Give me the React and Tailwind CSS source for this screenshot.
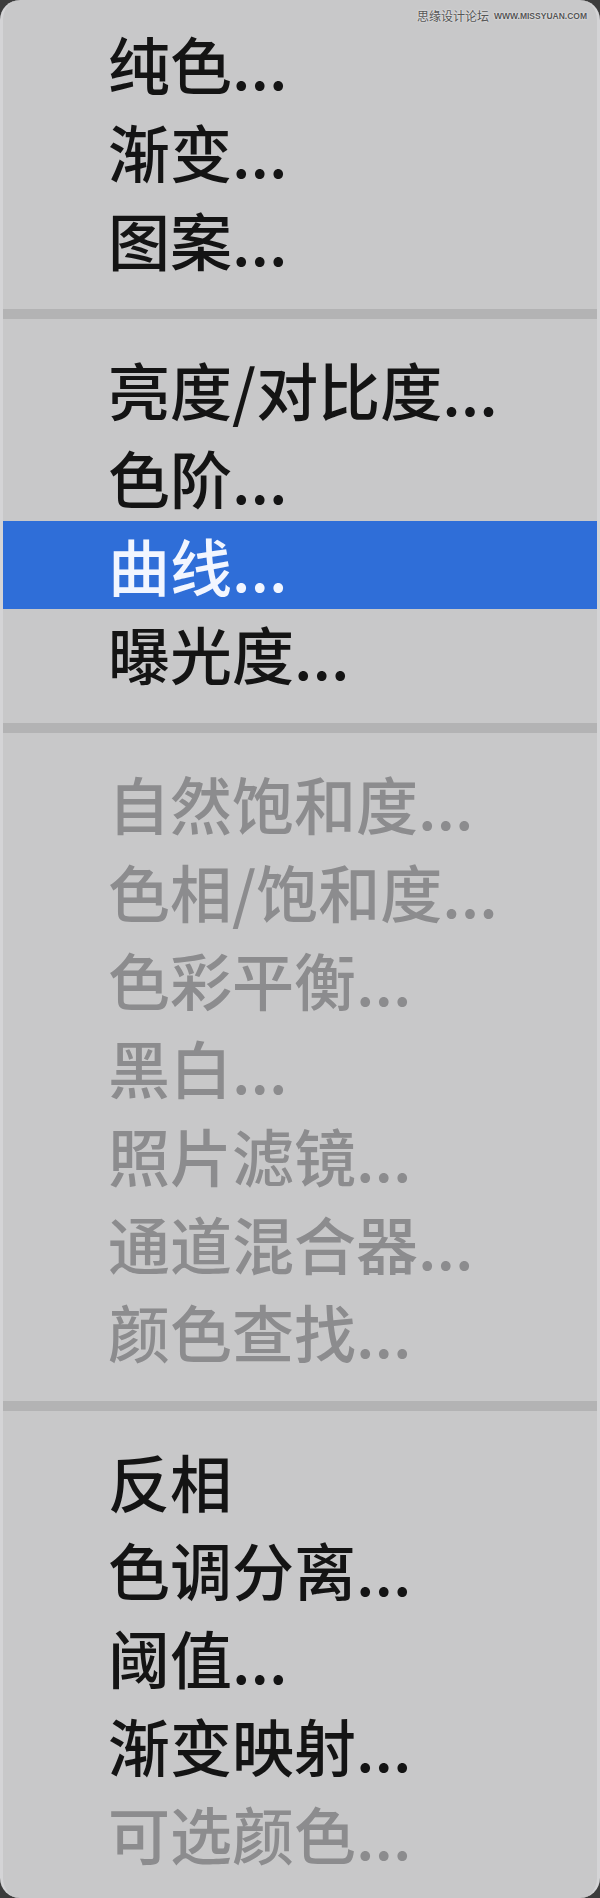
const groups = [
  [
    { label: "纯色..." },
    { label: "渐变..." },
    { label: "图案..." },
  ],
  [
    { label: "亮度/对比度..." },
    { label: "色阶..." },
    { label: "曲线...", active: true },
    { label: "曝光度..." },
  ],
  [
    { label: "自然饱和度...", disabled: true },
    { label: "色相/饱和度...", disabled: true },
    { label: "色彩平衡...", disabled: true },
    { label: "黑白...", disabled: true },
    { label: "照片滤镜...", disabled: true },
    { label: "通道混合器...", disabled: true },
    { label: "颜色查找...", disabled: true },
  ],
  [
    { label: "反相" },
    { label: "色调分离..." },
    { label: "阈值..." },
    { label: "渐变映射..." },
    { label: "可选颜色...", disabled: true },
  ],
];

const MenuItem = ({ item }) => {
  let tone = "text-[#141414]";
  if (item.disabled) tone = "text-[#8c8c8e]";
  if (item.active) tone = "bg-[#2f6ed8] text-[#f2f6ff]";

  return (
    <li className={`h-[88px] pl-[108px] text-[62px] leading-[88px] font-medium whitespace-nowrap ${tone}`}>
      {item.label}
    </li>
  );
};

export default function App() {
  return (
    <div className="w-[600px] h-[1898px] bg-[#3c3c3c]">
      <div
        className="relative w-full h-full rounded-[20px] bg-[#c8c8c9] border-x-[3px] border-[#d4d4d6] pt-[19px] overflow-hidden"
        style={{ fontFamily: '"Noto Sans CJK SC", "Noto Sans", sans-serif' }}
      >
        {/* watermark */}
        <div className="absolute top-[6px] right-[10px] flex items-center gap-[5px] text-[#555] [text-shadow:0_0_2px_#fff]">
          <span className="text-[12px] leading-[20px]">思缘设计论坛</span>
          <span className="text-[8.5px] font-bold" style={{ fontFamily: '"Liberation Sans", sans-serif' }}>
            WWW.MISSYUAN.COM
          </span>
        </div>

        {groups.map((group, gi) => (
          <div key={gi}>
            {gi > 0 && (
              <div className="h-[62px] flex items-center -mx-[3px]">
                <div className="h-[10px] w-full bg-[#b3b3b4]" />
              </div>
            )}
            <ul className="-mx-[3px]">
              {group.map((item) => (
                <MenuItem key={item.label} item={item} />
              ))}
            </ul>
          </div>
        ))}
      </div>
    </div>
  );
}
